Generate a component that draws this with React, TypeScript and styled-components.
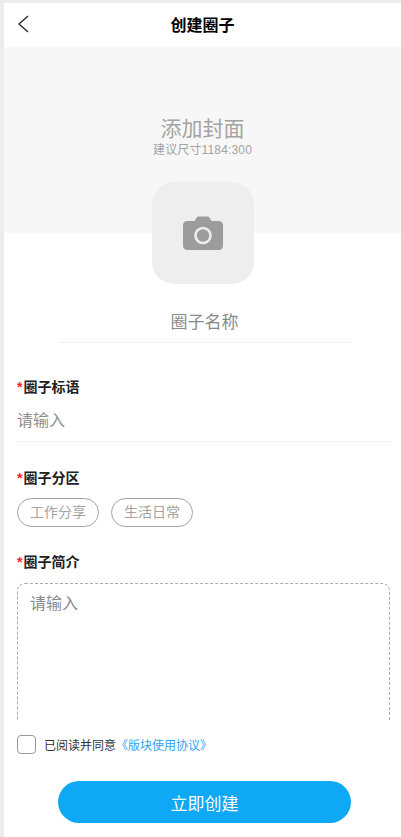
import React from "react";
import styled, { createGlobalStyle } from "styled-components";

const GlobalStyle = createGlobalStyle`
  html, body {
    margin: 0;
    padding: 0;
    background: #ececec;
    font-family: "Liberation Sans", "Noto Sans CJK SC", sans-serif;
  }
`;

const App = () => {
  return (
    <>
      <GlobalStyle />
      <Page>
        <Header>
          <BackButton>
            <svg width="12" height="18" viewBox="0 0 12 18" fill="none">
              <path d="M11 1L2 9l9 8" stroke="#1a2433" strokeWidth="1.3" />
            </svg>
          </BackButton>
          <Title>创建圈子</Title>
        </Header>
        <Scroll>
          <Cover>
            <CoverTitle>添加封面</CoverTitle>
            <CoverHint>建议尺寸1184:300</CoverHint>
          </Cover>
          <Avatar>
            <svg width="40" height="34" viewBox="0 0 40 34">
              <path
                d="M4 5h7.5l2-3.2C14 1 15 .5 16 .5h8c1 0 2 .5 2.500 1.300L28.500 5H36c2.200 0 4 1.800 4 4v21c0 2.200-1.800 4-4 4H4c-2.200 0-4-1.800-4-4V9c0-2.200 1.800-4 4-4z"
                fill="#9c9c9c"
              />
              <circle cx="20" cy="19.500" r="7.500" fill="none" stroke="#eeeeee" strokeWidth="2.600" />
            </svg>
          </Avatar>
          <NameField>圈子名称</NameField>
          <Section $top={34}>
            <Label><Star>*</Star>圈子标语</Label>
            <TextInput>请输入</TextInput>
          </Section>
          <Section $top={26} $gap={10}>
            <Label><Star>*</Star>圈子分区</Label>
            <Chips>
              <Chip>工作分享</Chip>
              <Chip>生活日常</Chip>
            </Chips>
          </Section>
          <Section $top={25} $gap={11}>
            <Label><Star>*</Star>圈子简介</Label>
            <TextArea>请输入</TextArea>
          </Section>
        </Scroll>
        <Footer>
          <Agreement>
            <CheckBox />
            <AgreeText>已阅读并同意</AgreeText>
            <AgreeLink>《版块使用协议》</AgreeLink>
          </Agreement>
          <SubmitButton>立即创建</SubmitButton>
        </Footer>
      </Page>
    </>
  );
};

export default App;

const Page = styled.div`
  margin: 3px 0 0 4px;
  height: 834px;
  background: #fff;
  display: flex;
  flex-direction: column;
  overflow: hidden;
`;

const Header = styled.header`
  height: 44px;
  flex-shrink: 0;
  display: flex;
  align-items: center;
  justify-content: center;
  position: relative;
`;

const BackButton = styled.div`
  position: absolute;
  left: 13px;
  top: 12px;
  line-height: 0;
`;

const Title = styled.h1`
  margin: -2px 0 0;
  font-size: 16px;
  font-weight: 700;
  color: #000;
`;

const Scroll = styled.div`
  height: 674px;
  flex-shrink: 0;
  overflow: hidden;
`;

const Cover = styled.div`
  height: 186px;
  background: #f7f7f7;
  display: flex;
  flex-direction: column;
  align-items: center;
  padding-top: 69px;
  box-sizing: border-box;
`;

const CoverTitle = styled.div`
  font-size: 21px;
  line-height: 25px;
  color: #a3a3a3;
`;

const CoverHint = styled.div`
  font-size: 12px;
  line-height: 14px;
  margin-top: 2px;
  letter-spacing: 0.15px;
  color: #a3a3a3;
`;

const Avatar = styled.div`
  width: 102px;
  height: 102px;
  margin: -51px 0 0 148px;
  border-radius: 22px;
  background: #eeeeee;
  display: flex;
  align-items: center;
  justify-content: center;
`;

const NameField = styled.div`
  width: 293px;
  height: 59px;
  box-sizing: border-box;
  margin-left: 54px;
  padding-top: 27px;
  border-bottom: 1px solid #eeeeee;
  font-size: 17px;
  line-height: 24px;
  text-align: center;
  color: #8a8a8a;
`;

const Section = styled.section<{ $top: number; $gap?: number }>`
  margin: ${(p) => p.$top}px 10px 0 13px;
  display: flex;
  flex-direction: column;
  gap: ${(p) => p.$gap ?? 0}px;
`;

const Label = styled.div`
  font-size: 14px;
  line-height: 20px;
  font-weight: 700;
  color: #222;
`;

const Star = styled.span`
  color: #f5222d;
  margin-right: 1px;
`;

const TextInput = styled.div`
  height: 45px;
  line-height: 42px;
  box-sizing: border-box;
  padding-top: 3px;
  border-bottom: 1px solid #eeeeee;
  font-size: 16px;
  color: #8f8f8f;
`;

const Chips = styled.div`
  display: flex;
  gap: 12px;
`;

const Chip = styled.div`
  width: 82px;
  height: 29px;
  box-sizing: border-box;
  border: 1px solid #a3a3a3;
  border-radius: 15px;
  font-size: 14px;
  line-height: 27px;
  text-align: center;
  color: #a3a3a3;
`;

const TextArea = styled.div`
  width: 373px;
  height: 220px;
  box-sizing: border-box;
  padding: 9px 12px;
  border: 1px dashed #ababab;
  border-radius: 8px;
  font-size: 16px;
  line-height: 22px;
  color: #8a8a8a;
`;

const Footer = styled.footer`
  display: flex;
  flex-direction: column;
  padding: 14px 0 0 13px;
`;

const Agreement = styled.div`
  display: flex;
  align-items: center;
  height: 19px;
`;

const CheckBox = styled.div`
  width: 19px;
  height: 19px;
  box-sizing: border-box;
  border: 1px solid #999;
  border-radius: 4px;
  margin-right: 8px;
`;

const AgreeText = styled.span`
  font-size: 12px;
  color: #333;
`;

const AgreeLink = styled.span`
  font-size: 12px;
  color: #2ea5f2;
`;

const SubmitButton = styled.button`
  width: 293px;
  height: 42px;
  margin: 27px 0 0 41px;
  border: 0;
  border-radius: 21px;
  background: #0ea8f5;
  color: #fff;
  font-family: inherit;
  font-size: 17px;
`;
